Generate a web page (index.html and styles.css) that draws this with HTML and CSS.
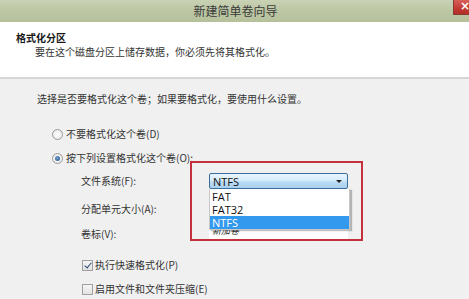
FILE: index.html
```html
<!DOCTYPE html>
<html lang="zh-CN">
<head>
<meta charset="utf-8">
<title>新建简单卷向导</title>
<link rel="stylesheet" href="styles.css">
</head>
<body>
<div class="window">
  <div class="titlebar">
    <span class="title">新建简单卷向导</span>
    <span class="close">×</span>
  </div>
  <div class="header">
    <div class="h-title">格式化分区</div>
    <div class="h-sub">要在这个磁盘分区上储存数据，你必须先将其格式化。</div>
  </div>
  <div class="content">
    <p class="intro">选择是否要格式化这个卷；如果要格式化，要使用什么设置。</p>
    <div class="options">
      <label class="opt"><span class="radio"></span>不要格式化这个卷(D)</label>
      <label class="opt"><span class="radio checked"></span>按下列设置格式化这个卷(O):</label>
    </div>
    <div class="form">
      <div class="lbl">文件系统(F):</div>
      <div class="field">
        <div class="combo"><span>NTFS</span><span class="arrow"></span></div>
        <ul class="dropdown">
          <li>FAT</li>
          <li>FAT32</li>
          <li class="sel">NTFS</li>
        </ul>
      </div>
      <div class="lbl">分配单元大小(A):</div>
      <div class="field"></div>
      <div class="lbl">卷标(V):</div>
      <div class="field"><div class="textbox">新加卷</div></div>
    </div>
    <div class="checks">
      <label class="opt"><span class="check on"></span>执行快速格式化(P)</label>
      <label class="opt"><span class="check"></span>启用文件和文件夹压缩(E)</label>
    </div>
  </div>
  <div class="highlight"></div>
</div>
</body>
</html>
```

FILE: styles.css
```css
html, body {
  margin: 0;
  padding: 0;
}
body {
  width: 469px;
  height: 299px;
  overflow: hidden;
  font-family: "Noto Sans CJK SC", "Noto Sans", sans-serif;
  font-size: 10px;
  color: #2a2a2a;
  background: #f0f0f0;
}
.window {
  position: relative;
  width: 469px;
  height: 299px;
  overflow: hidden;
}
.titlebar {
  position: relative;
  height: 22px;
  background: linear-gradient(180deg, #c9d2b5 0%, #bcc6a3 50%, #b6c19c 100%);
  display: flex;
  align-items: center;
  justify-content: center;
}
.title {
  font-size: 12px;
  line-height: 22px;
  color: #3a3a3a;
  margin-left: 2px;
}
.close {
  position: absolute;
  right: -6px;
  top: 0;
  width: 22px;
  height: 15px;
  background: linear-gradient(180deg, #d9605a 0%, #c23a32 60%, #b1302a 100%);
  border: 1px solid #8a3a30;
  border-top: none;
  color: #fff;
  font-size: 12px;
  line-height: 13px;
  text-align: left;
  padding-left: 6px;
  box-sizing: border-box;
  font-family: "DejaVu Sans", sans-serif;
  font-weight: bold;
}
.header {
  height: 57px;
  background: #ffffff;
  border-bottom: 2px solid #d6d6d6;
  padding: 9px 0 0 16px;
  box-sizing: border-box;
}
.h-title {
  font-weight: bold;
  font-size: 10px;
  line-height: 14px;
  color: #1a1a1a;
}
.h-sub {
  margin-left: 19px;
  line-height: 14px;
  color: #333;
}
.content {
  padding: 13px 0 0 0;
}
.intro {
  margin: 0 0 0 37px;
  line-height: 14px;
  color: #333;
}
.options {
  margin: 21px 0 0 52px;
  display: flex;
  flex-direction: column;
  gap: 10px;
}
.opt {
  display: flex;
  align-items: center;
  height: 14px;
  line-height: 14px;
  color: #333;
}
.radio {
  width: 9px;
  height: 9px;
  border: 1px solid #9a9a9a;
  border-radius: 50%;
  background: radial-gradient(circle, #ffffff 0%, #e4e4e4 100%);
  margin-right: 3px;
  box-sizing: content-box;
  position: relative;
}
.radio.checked::after {
  content: "";
  position: absolute;
  left: 2px;
  top: 2px;
  width: 5px;
  height: 5px;
  border-radius: 50%;
  background: radial-gradient(circle at 40% 40%, #6fa0d0 0%, #1f4f86 100%);
}
.form {
  margin: 7px 0 0 81px;
  display: grid;
  grid-template-columns: 128px 139px;
  grid-template-rows: 18px 18px 18px;
  row-gap: 10px;
  align-items: center;
}
.form .lbl {
  line-height: 14px;
  color: #333;
}
.form .lbl:nth-of-type(5) {
  margin-top: -6px;
}
.field {
  position: relative;
  height: 18px;
}
.combo {
  height: 16px;
  margin-top: 1px;
  box-sizing: border-box;
  border: 1px solid #3c6e9c;
  border-radius: 2px;
  background: linear-gradient(180deg, #eaf5fd 0%, #d6ecfb 45%, #bcdcf4 55%, #a8d0ef 100%);
  display: flex;
  align-items: center;
  justify-content: space-between;
  padding: 0 5px 0 3px;
  font-family: "Open Sans", "Noto Sans", sans-serif;
  font-size: 11px;
  color: #111;
}
.arrow {
  width: 0;
  height: 0;
  border-left: 3px solid transparent;
  border-right: 3px solid transparent;
  border-top: 3px solid #222;
}
.dropdown {
  position: absolute;
  left: 0;
  top: 17px;
  width: 141px;
  margin: 0;
  padding: 1px 0 0 0;
  list-style: none;
  background: #fff;
  border: 1px solid #c8c8c8;
  border-top: none;
  box-shadow: 2px 1px 1px rgba(0,0,0,0.25);
  z-index: 2;
  font-family: "Open Sans", "Noto Sans", sans-serif;
  font-size: 11px;
  color: #111;
  box-sizing: border-box;
}
.dropdown li {
  height: 13px;
  line-height: 13px;
  padding-left: 2px;
}
.dropdown li.sel {
  background: #3399ee;
  color: #fff;
}
.textbox {
  height: 18px;
  line-height: 18px;
  background: #ffffff;
  padding-left: 3px;
  margin-top: -6px;
  font-size: 9px;
  color: #222;
  font-style: italic;
}
.checks {
  margin: 12px 0 0 82px;
  display: flex;
  flex-direction: column;
  gap: 10px;
}
.check {
  width: 9px;
  height: 9px;
  border: 1px solid #a0a0a0;
  background: linear-gradient(180deg, #f6f6f6 0%, #e2e2e2 100%);
  margin-right: 2px;
  position: relative;
}
.check.on::after {
  content: "";
  position: absolute;
  left: 3px;
  top: 0px;
  width: 3px;
  height: 6px;
  border-right: 1.5px solid #2a4a7a;
  border-bottom: 1.5px solid #2a4a7a;
  transform: rotate(40deg);
}
.highlight {
  position: absolute;
  left: 190px;
  top: 161px;
  width: 173px;
  height: 80px;
  box-sizing: border-box;
  border: 2px solid #c4303c;
  z-index: 5;
  pointer-events: none;
}
```
